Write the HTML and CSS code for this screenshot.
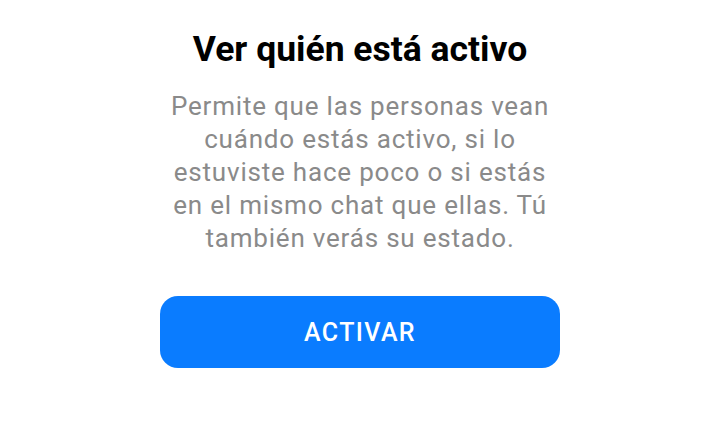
FILE: index.html
```html
<!DOCTYPE html>
<html lang="es">
<head>
<meta charset="utf-8">
<link rel="stylesheet" href="styles.css">
</head>
<body>
<main class="panel">
  <h1 class="title">Ver quién está activo</h1>
  <p class="desc">Permite que las personas vean cuándo estás activo, si lo estuviste hace poco o si estás en el mismo chat que ellas. Tú también verás su estado.</p>
  <button class="cta">ACTIVAR</button>
</main>
</body>
</html>
```
FILE: styles.css
```css
html, body {
  margin: 0;
  padding: 0;
  background: #ffffff;
}
body {
  font-family: Roboto, "Noto Sans", sans-serif;
}
.panel {
  display: flex;
  flex-direction: column;
  align-items: center;
  padding-top: 28px;
}
.title {
  margin: 0;
  font-size: 35.5px;
  line-height: 42px;
  font-weight: 700;
  color: #000000;
}
.desc {
  margin: 20px 0 0;
  width: 400px;
  text-align: center;
  font-size: 26px;
  letter-spacing: 0.8px;
  line-height: 33px;
  color: #8a8a8a;
}
.cta {
  margin-top: 41px;
  width: 400px;
  height: 72px;
  border: none;
  border-radius: 18px;
  background: #0a7cff;
  color: #ffffff;
  font-family: Roboto, sans-serif;
  font-size: 25px;
  letter-spacing: 1.4px;
  font-weight: 500;
}
```
